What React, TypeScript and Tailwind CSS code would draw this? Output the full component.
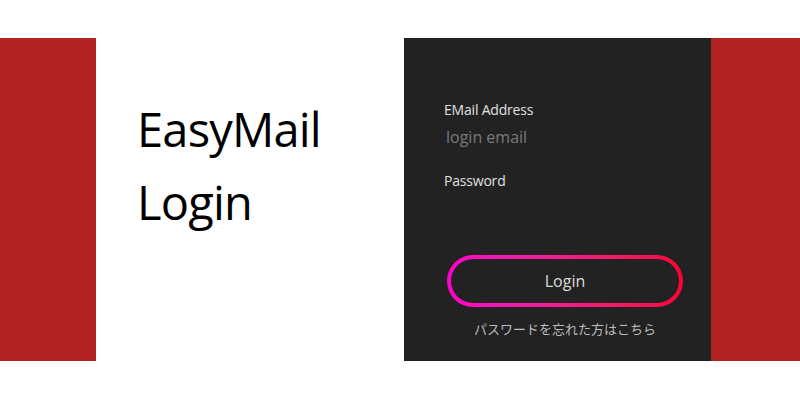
export default function App() {
  return (
    <div className="h-[400px] w-[800px] bg-white pt-[38px]">
      <div className="flex h-[323px]">
        {/* left red strip */}
        <div className="w-[96px] bg-[#b22222]" />

        {/* title */}
        <div className="w-[308px] bg-white pl-[41px] pt-[55px]">
          <h1 className="font-['Open_Sans','Noto_Sans',sans-serif] text-[47px] leading-[73px] font-normal tracking-[-0.8px] text-black">
            EasyMail
            <br />
            Login
          </h1>
        </div>

        {/* form panel */}
        <div className="w-[307px] bg-[#222222] pl-[40px] pr-[28px] pt-[62px] font-['Open_Sans','Noto_Sans','Noto_Sans_CJK_JP',sans-serif]">
          <label className="block text-[14px] leading-5 tracking-[-0.2px] text-[#e0e0e0]">EMail Address</label>
          <input
            type="email"
            placeholder="login email"
            className="mt-[5px] block w-[230px] bg-transparent px-[2px] text-[16px] leading-6 text-[#ddd] outline-none placeholder:text-[#7a7a7a]"
          />
          <label className="mt-[22px] block text-[14px] leading-5 tracking-[-0.2px] text-[#e0e0e0]">Password</label>
          <input
            type="password"
            className="mt-[6px] block w-[230px] bg-transparent px-[2px] text-[16px] leading-6 text-[#ddd] outline-none"
          />

          <div className="mt-[34px] ml-[3px] w-[236px] rounded-full bg-linear-to-r from-[#ff00cc] to-[#ff0033] p-[4px]">
            <button className="flex h-[44px] w-full items-center justify-center rounded-full bg-[#222222] text-[16px] text-[#dcdcdc]">
              Login
            </button>
          </div>

          <div className="ml-[3px] mt-[12px] w-[236px] text-center text-[13px] leading-5 text-[#bdbdbd]">
            パスワードを忘れた方はこちら
          </div>
        </div>

        {/* right red strip */}
        <div className="flex-1 bg-[#b22222]" />
      </div>
    </div>
  );
}
